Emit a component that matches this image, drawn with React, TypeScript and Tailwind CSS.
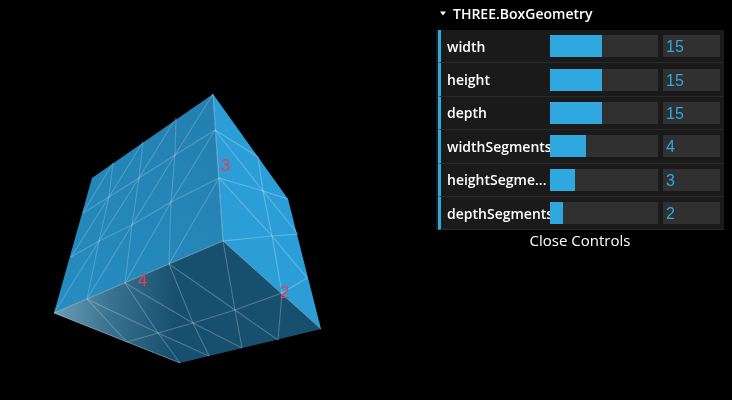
const ROWS = [
  { label: 'width', value: 15, fill: 52 },
  { label: 'height', value: 15, fill: 52 },
  { label: 'depth', value: 15, fill: 52 },
  { label: 'widthSegments', value: 4, fill: 36 },
  { label: 'heightSegme...', value: 3, fill: 25 },
  { label: 'depthSegments', value: 2, fill: 13 },
]

// wireframe segments read off the picture, [x1, y1, x2, y2]
const LEFT_LINES = [
  [215, 130, 175, 155], [175, 155, 139, 178], [139, 178, 109, 197], [109, 197, 83, 213],
  [219, 178, 171, 202], [171, 202, 132, 225], [132, 225, 99, 241], [99, 241, 71, 257],
  [176, 118, 175, 155], [175, 155, 171, 202], [171, 202, 169, 264],
  [143, 142, 139, 178], [139, 178, 132, 225], [132, 225, 125, 283],
  [113, 163, 109, 197], [109, 197, 99, 241], [99, 241, 87, 299],
  [213, 94, 175, 155], [175, 155, 132, 225], [132, 225, 87, 299],
  [176, 118, 139, 178], [139, 178, 99, 241], [99, 241, 54, 313],
  [143, 142, 109, 197], [109, 197, 71, 257],
  [113, 163, 83, 213],
  [215, 130, 171, 202], [171, 202, 125, 283],
  [219, 178, 169, 264],
]

const RIGHT_LINES = [
  [215, 130, 258, 157], [215, 130, 263, 191], [258, 157, 263, 191],
  [219, 178, 263, 191], [263, 191, 288, 199], [219, 178, 272, 236],
  [263, 191, 272, 236], [263, 191, 298, 234], [223, 241, 272, 236],
  [272, 236, 298, 234], [272, 236, 282, 293], [272, 236, 307, 278],
  [282, 293, 307, 278],
]

const BOTTOM_LINES = [
  [282, 293, 235, 310], [235, 310, 193, 323], [193, 323, 158, 333], [158, 333, 127, 342],
  [223, 241, 235, 310], [235, 310, 242, 348],
  [169, 264, 193, 323], [193, 323, 209, 356],
  [125, 283, 158, 333], [158, 333, 180, 363],
  [87, 299, 127, 342], [282, 293, 278, 340],
  [169, 264, 235, 310], [235, 310, 278, 340],
  [125, 283, 193, 323], [193, 323, 242, 348],
  [87, 299, 158, 333], [158, 333, 209, 356],
]

function Lines({ items, opacity }: { items: number[][]; opacity: number }) {
  return (
    <g stroke="#ffffff" strokeOpacity={opacity} strokeWidth={1.1}>
      {items.map(([x1, y1, x2, y2]) => (
        <line key={`${x1}-${y1}-${x2}-${y2}`} x1={x1} y1={y1} x2={x2} y2={y2} />
      ))}
    </g>
  )
}

function Cube() {
  return (
    <svg className="w-[436px] h-[400px] shrink-0" viewBox="0 0 436 400">
      <defs>
        <linearGradient id="bottomShade" gradientUnits="userSpaceOnUse" x1="54" y1="313" x2="175" y2="320">
          <stop offset="0" stopColor="#6a9db5" />
          <stop offset="0.45" stopColor="#3a7391" />
          <stop offset="1" stopColor="#174f6e" />
        </linearGradient>
        <linearGradient id="leftShade" gradientUnits="userSpaceOnUse" x1="213" y1="94" x2="54" y2="313">
          <stop offset="0" stopColor="#237fae" />
          <stop offset="1" stopColor="#268dc2" />
        </linearGradient>
      </defs>

      <polygon points="213,94 92,178 54,313 223,241" fill="url(#leftShade)" />
      <polygon points="213,94 288,199 321,329 223,241" fill="#2b9ed8" />
      <polygon points="223,241 321,329 180,363 54,313" fill="url(#bottomShade)" />

      <Lines items={LEFT_LINES} opacity={0.2} />
      <Lines items={RIGHT_LINES} opacity={0.26} />
      <Lines items={BOTTOM_LINES} opacity={0.24} />

      {/* brighter box edges */}
      <g stroke="#ffffff" strokeOpacity={0.38} strokeWidth={1}>
        <line x1={213} y1={94} x2={223} y2={241} />
        <line x1={223} y1={241} x2={54} y2={313} />
        <line x1={223} y1={241} x2={321} y2={329} />
        <line x1={54} y1={313} x2={180} y2={363} />
      </g>

      <g fill="#ee3b55" fontSize={17} fontFamily="'Liberation Sans', sans-serif" textAnchor="middle">
        <text x={225.5} y={171}>3</text>
        <text x={142.5} y={286}>4</text>
        <text x={284.5} y={298}>2</text>
      </g>
    </svg>
  )
}

export default function App() {
  return (
    <div className="flex w-[732px] h-[400px] bg-black overflow-hidden blur-[0.4px] font-['Open_Sans',sans-serif]">
      <Cube />

      <div className="w-[288px] flex flex-col">
        <div className="h-[30px] flex items-center pl-[3px] pb-[4px] text-white text-[14px] font-semibold">
          <svg className="w-[8px] h-[5px] mr-[6px]" viewBox="0 0 8 5">
            <polygon points="1,0.5 7,0.5 4,4.5" fill="#ffffff" />
          </svg>
          THREE.BoxGeometry
        </div>

        <div className="bg-[#1a1a1a] pl-[2px] pr-[1px]">
          {ROWS.map(row => (
            <div
              key={row.label}
              className="h-[33.4px] flex items-center border-l-[3px] border-l-[#2fa8e0] border-b border-b-[#2a2a2a]"
            >
              <div className="w-[109px] pl-[6px] text-[14px] font-semibold text-white whitespace-nowrap overflow-hidden">
                {row.label}
              </div>
              <div className="w-[108px] h-[22px] bg-[#303030]">
                <div className="h-full bg-[#2fa8e0]" style={{ width: row.fill }} />
              </div>
              <div className="w-[57px] h-[22px] ml-[5px] pl-[3px] bg-[#303030] text-[#2fa8e0] text-[16px] leading-[24px] font-['Liberation_Sans',sans-serif]">
                {row.value}
              </div>
            </div>
          ))}
        </div>

        <div className="h-[22px] pb-[2px] flex items-center justify-center text-white text-[15px] font-medium">
          Close Controls
        </div>
      </div>
    </div>
  )
}
